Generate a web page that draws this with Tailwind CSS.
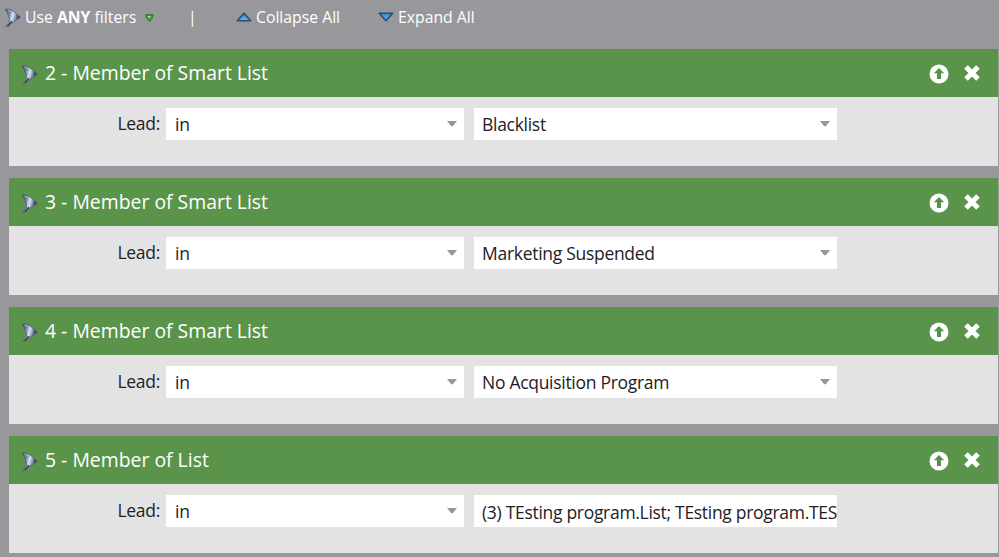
<!DOCTYPE html>
<html lang="en">
<head>
<meta charset="utf-8">
<title>Smart List Filters</title>
<script src="https://cdn.jsdelivr.net/npm/@tailwindcss/browser@4"></script>
</head>
<body class="w-[999px] h-[557px] overflow-hidden bg-[#98979b] font-['Open_Sans','Noto_Sans',sans-serif] text-[#1f2026]">
<svg class="absolute h-0 w-0">
  <defs>
    <linearGradient id="metal" x1="0" y1="0" x2="1" y2=".35"><stop offset="0" stop-color="#3f4963"/><stop offset=".35" stop-color="#7c8bab"/><stop offset=".55" stop-color="#dbe5f5"/><stop offset=".75" stop-color="#8193b8"/><stop offset="1" stop-color="#3b4560"/></linearGradient>
    <linearGradient id="blue" x1="0" y1="0" x2="0" y2="1"><stop offset="0" stop-color="#3b8bce"/><stop offset="1" stop-color="#5db2ea"/></linearGradient>
  </defs>
  <symbol id="funnel" viewBox="0 0 17 20">
    <path d="M1.300 1.300 C4 .4 7 1.500 9.500 3.500 L16.300 9 C15 11.300 11.500 12 9.300 14 L4 18.800 L1.600 18.500 L5.800 13.500 C6 9.500 3.500 5.500 1.300 1.300Z" fill="url(#metal)" stroke="#454f69" stroke-width=".6"/>
    <path d="M3.600 17.900 L8 13.300" stroke="#2c3448" stroke-width="1.400"/>
    <path d="M3.500 2 L8.500 4" stroke="#b7c2d6" stroke-width=".9"/>
    <path d="M12.800 6.500 L15.800 9.200 L12.500 11" fill="#46506b"/>
  </symbol>
  <symbol id="up" viewBox="0 0 20 20">
    <circle cx="10" cy="10" r="9.500" fill="#fff"/>
    <path d="M10 4 L15.200 9.300 H12 V15 H8 V9.300 H4.800Z" fill="#57924a"/>
  </symbol>
  <symbol id="close" viewBox="0 0 18 18">
    <path d="M3 3 L15 15 M15 3 L3 15" stroke="#fff" stroke-width="5"/>
  </symbol>
  <symbol id="caret" viewBox="0 0 10 6"><path d="M0 0 H10 L5.800 5.200 H4.200Z" fill="#97979a"/></symbol>
</svg>

<header class="flex h-[49px] items-start pl-1 text-[15.750px] leading-[34px] text-white">
  <svg class="mt-2 h-[20px] w-[17px]"><use href="#funnel"/></svg>
  <span class="ml-1 w-[111px] whitespace-nowrap">Use <b>ANY</b> filters</span>
  <svg class="ml-[9px] mt-[14px] h-[8px] w-[9px]" viewBox="0 0 9 8"><path d="M1 1 H8 L6.800 4.500 L4.500 7 L2.200 4.500Z" fill="#59b653" stroke="#29822a" stroke-width="1.300"/><path d="M3 2.500 H5" stroke="#c3efb8"/></svg>
  <span class="ml-[34px] w-[48px]">|</span>
  <svg class="mt-3 h-[10px] w-[16px]" viewBox="0 0 16 10"><path d="M8 1.200 L14.700 8.700 H1.300Z" fill="url(#blue)" stroke="#23516f" stroke-width="1.600" stroke-linejoin="round"/></svg>
  <span class="ml-1 w-[122px] whitespace-nowrap">Collapse All</span>
  <svg class="mt-3 h-[10px] w-[16px]" viewBox="0 0 16 10"><path d="M8 8.800 L14.700 1.300 H1.300Z" fill="url(#blue)" stroke="#23516f" stroke-width="1.600" stroke-linejoin="round"/></svg>
  <span class="ml-1 whitespace-nowrap">Expand All</span>
</header>

<main class="ml-[9px] flex w-[989px] flex-col gap-3">
  <section class="h-[117px] bg-[#e3e3e4]">
    <div class="flex h-12 items-center bg-[#5a944a] pl-3 pr-[17px] text-white">
      <svg class="mt-1 h-[20px] w-[17px]"><use href="#funnel"/></svg>
      <h2 class="ml-[7px] flex-1 text-[19.400px]">2 - Member of Smart List</h2>
      <svg class="mt-0.5 h-[20px] w-[20px]"><use href="#up"/></svg>
      <svg class="ml-[14px] h-[18px] w-[18px]"><use href="#close"/></svg>
    </div>
    <div class="flex pt-[11px] text-[17.500px] tracking-[-0.29px] leading-8">
      <span class="-mt-px w-[157px] pr-[6px] text-right">Lead:</span>
      <div class="flex h-8 w-[298px] items-center justify-between bg-white pl-[9px] pr-[7px]"><span>in</span><svg class="h-[6px] w-[10px]"><use href="#caret"/></svg></div>
      <div class="ml-[10px] flex h-8 w-[363px] items-center justify-between bg-white pl-2 pr-[7px]"><span>Blacklist</span><svg class="h-[6px] w-[10px]"><use href="#caret"/></svg></div>
    </div>
  </section>

  <section class="h-[117px] bg-[#e3e3e4]">
    <div class="flex h-12 items-center bg-[#5a944a] pl-3 pr-[17px] text-white">
      <svg class="mt-1 h-[20px] w-[17px]"><use href="#funnel"/></svg>
      <h2 class="ml-[7px] flex-1 text-[19.400px]">3 - Member of Smart List</h2>
      <svg class="mt-0.5 h-[20px] w-[20px]"><use href="#up"/></svg>
      <svg class="ml-[14px] h-[18px] w-[18px]"><use href="#close"/></svg>
    </div>
    <div class="flex pt-[11px] text-[17.500px] tracking-[-0.29px] leading-8">
      <span class="-mt-px w-[157px] pr-[6px] text-right">Lead:</span>
      <div class="flex h-8 w-[298px] items-center justify-between bg-white pl-[9px] pr-[7px]"><span>in</span><svg class="h-[6px] w-[10px]"><use href="#caret"/></svg></div>
      <div class="ml-[10px] flex h-8 w-[363px] items-center justify-between bg-white pl-2 pr-[7px]"><span>Marketing Suspended</span><svg class="h-[6px] w-[10px]"><use href="#caret"/></svg></div>
    </div>
  </section>

  <section class="h-[117px] bg-[#e3e3e4]">
    <div class="flex h-12 items-center bg-[#5a944a] pl-3 pr-[17px] text-white">
      <svg class="mt-1 h-[20px] w-[17px]"><use href="#funnel"/></svg>
      <h2 class="ml-[7px] flex-1 text-[19.400px]">4 - Member of Smart List</h2>
      <svg class="mt-0.5 h-[20px] w-[20px]"><use href="#up"/></svg>
      <svg class="ml-[14px] h-[18px] w-[18px]"><use href="#close"/></svg>
    </div>
    <div class="flex pt-[11px] text-[17.500px] tracking-[-0.29px] leading-8">
      <span class="-mt-px w-[157px] pr-[6px] text-right">Lead:</span>
      <div class="flex h-8 w-[298px] items-center justify-between bg-white pl-[9px] pr-[7px]"><span>in</span><svg class="h-[6px] w-[10px]"><use href="#caret"/></svg></div>
      <div class="ml-[10px] flex h-8 w-[363px] items-center justify-between bg-white pl-2 pr-[7px]"><span>No Acquisition Program</span><svg class="h-[6px] w-[10px]"><use href="#caret"/></svg></div>
    </div>
  </section>

  <section class="h-[117px] bg-[#e3e3e4]">
    <div class="flex h-12 items-center bg-[#5a944a] pl-3 pr-[17px] text-white">
      <svg class="mt-1 h-[20px] w-[17px]"><use href="#funnel"/></svg>
      <h2 class="ml-[7px] flex-1 text-[19.400px]">5 - Member of List</h2>
      <svg class="mt-0.5 h-[20px] w-[20px]"><use href="#up"/></svg>
      <svg class="ml-[14px] h-[18px] w-[18px]"><use href="#close"/></svg>
    </div>
    <div class="flex pt-[11px] text-[17.500px] tracking-[-0.29px] leading-8">
      <span class="-mt-px w-[157px] pr-[6px] text-right">Lead:</span>
      <div class="flex h-8 w-[298px] items-center justify-between bg-white pl-[9px] pr-[7px]"><span>in</span><svg class="h-[6px] w-[10px]"><use href="#caret"/></svg></div>
      <div class="ml-[10px] h-8 w-[363px] overflow-hidden whitespace-nowrap bg-white pl-2 pt-px tracking-[-0.3px]">(3) TEsting program.List; TEsting program.TES</div>
    </div>
  </section>
</main>
</body>
</html>
